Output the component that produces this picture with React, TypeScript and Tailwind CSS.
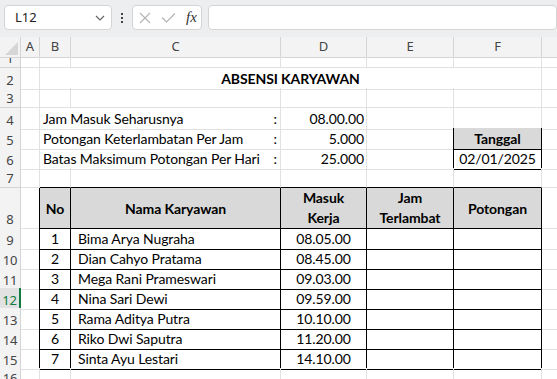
import type { ReactNode } from 'react';

const COLS = 'grid grid-cols-[21px_19px_31px_210px_86px_87px_88px_1fr]';
const GRID = 'border-r border-b border-[#e1e1e1]';
const BOX = 'border-r border-b border-black';
const HEAD_FILL = 'bg-[#d9d9d9] font-bold';

const employees = [
  { no: 1, name: 'Bima Arya Nugraha', masuk: '08.05.00' },
  { no: 2, name: 'Dian Cahyo Pratama', masuk: '08.45.00' },
  { no: 3, name: 'Mega Rani Prameswari', masuk: '09.03.00' },
  { no: 4, name: 'Nina Sari Dewi', masuk: '09.59.00' },
  { no: 5, name: 'Rama Aditya Putra', masuk: '10.10.00' },
  { no: 6, name: 'Riko Dwi Saputra', masuk: '11.20.00' },
  { no: 7, name: 'Sinta Ayu Lestari', masuk: '14.10.00' },
];

const RowHead = ({ n, active = false }: { n: number; active?: boolean }) => (
  <div
    className={
      active
        ? "flex items-end justify-center border-b border-[#d4d4d4] border-r-2 border-r-[#107c41] bg-[#e2e2e2] text-[13px] leading-[18px] text-[#107c41] font-['Noto_Sans',sans-serif]"
        : "flex items-end justify-center border-r border-b border-[#d4d4d4] bg-[#f3f3f3] text-[13px] leading-[18px] text-[#444] font-['Noto_Sans',sans-serif]"
    }
  >
    {n}
  </div>
);

const Row = ({ n, tall = false, active = false, children }: { n: number; tall?: boolean; active?: boolean; children: ReactNode }) => (
  <div className={`${COLS} ${tall ? 'h-[40px]' : 'h-[20px]'}`}>
    <RowHead n={n} active={active} />
    {children}
  </div>
);

const EmptyRow = ({ n }: { n: number }) => (
  <Row n={n}>
    <div className={GRID} />
    <div className={GRID} />
    <div className={GRID} />
    <div className={GRID} />
    <div className={GRID} />
    <div className={GRID} />
    <div className="border-b border-[#e1e1e1]" />
  </Row>
);

const InfoRow = ({ n, label, value, right }: { n: number; label: string; value: string; right: ReactNode }) => (
  <Row n={n}>
    <div className={GRID} />
    <div className={`col-span-2 flex items-center justify-between pl-[3px] pr-[3px] ${GRID}`}>
      <span>{label}</span>
      <span>:</span>
    </div>
    <div className={`flex items-center justify-end pr-[2px] ${GRID}`}>{value}</div>
    {right}
    <div className="border-b border-[#e1e1e1]" />
  </Row>
);

export default function App() {
  return (
    <div className="w-[557px] h-[379px] overflow-hidden bg-white">
      {/* toolbar */}
      <div className="h-[37px] bg-[#eceef0] flex items-start pt-[5px]">
        <div className="ml-[4px] w-[111px] h-[25px] rounded-[4px] border border-[#d4d4d4] bg-white flex items-center justify-between pl-[10px] pr-[6px] text-[13px] text-[#222] font-['Noto_Sans',sans-serif]">
          <span>L12</span>
          <svg width="10" height="6" viewBox="0 0 10 6" fill="none" stroke="#666" strokeWidth="1.2">
            <path d="M1 1l4 4 4-4" />
          </svg>
        </div>
        <div className="ml-[9px] h-[25px] flex flex-col items-center justify-center gap-[2px]">
          <span className="w-[2px] h-[2px] bg-[#444]" />
          <span className="w-[2px] h-[2px] bg-[#444]" />
          <span className="w-[2px] h-[2px] bg-[#444]" />
        </div>
        <div className="ml-[9px] w-[72px] h-[25px] rounded-[4px] border border-[#d4d4d4] bg-white flex items-center pl-[6px]">
          <svg width="12" height="12" viewBox="0 0 12 12" fill="none" stroke="#b3b3b3" strokeWidth="1.1">
            <path d="M1 1l10 10M11 1L1 11" />
          </svg>
          <svg className="ml-[10px]" width="15" height="10" viewBox="0 0 15 10" fill="none" stroke="#b3b3b3" strokeWidth="1.1">
            <path d="M1 4.5l4.5 4.5L14 0.5" />
          </svg>
          <span className="ml-[10px] text-[15px] italic text-[#333] font-['Liberation_Serif',serif]">fx</span>
        </div>
        <div className="ml-[6px] w-[360px] h-[25px] rounded-[4px] border border-[#d4d4d4] bg-white" />
      </div>

      {/* column headers */}
      <div className={`${COLS} h-[20px] bg-[#f3f3f3] text-[13px] text-[#444] font-['Noto_Sans',sans-serif]`}>
        <div className="relative border-r border-b border-[#d4d4d4]">
          <svg className="absolute right-[2px] bottom-[2px]" width="13" height="13" viewBox="0 0 13 13">
            <path d="M13 0V13H0Z" fill="#d6d6d6" />
          </svg>
        </div>
        {['A', 'B', 'C', 'D', 'E', 'F'].map((c) => (
          <div key={c} className="flex items-center justify-center border-r border-b border-[#d4d4d4]">
            {c}
          </div>
        ))}
        <div className="border-b border-[#d4d4d4]" />
      </div>

      {/* sheet body */}
      <div className="h-[322px] overflow-hidden text-[14px] tracking-[-0.1px] text-black font-['Lato',sans-serif]">
        <div className="mt-[-9px]">
          <EmptyRow n={1} />
          <Row n={2}>
            <div className={GRID} />
            <div className={`col-span-5 flex items-center justify-center font-bold ${GRID}`}>ABSENSI KARYAWAN</div>
            <div className="border-b border-[#e1e1e1]" />
          </Row>
          <EmptyRow n={3} />
          <InfoRow
            n={4}
            label="Jam Masuk Seharusnya"
            value="08.00.00"
            right={
              <>
                <div className={GRID} />
                <div className="border-r border-r-[#e1e1e1] border-b border-b-black" />
              </>
            }
          />
          <InfoRow
            n={5}
            label="Potongan Keterlambatan Per Jam"
            value="5.000"
            right={
              <>
                <div className="border-r border-r-black border-b border-b-[#e1e1e1]" />
                <div className={`flex items-center justify-center ${HEAD_FILL} ${BOX}`}>Tanggal</div>
              </>
            }
          />
          <InfoRow
            n={6}
            label="Batas Maksimum Potongan Per Hari"
            value="25.000"
            right={
              <>
                <div className="border-r border-r-black border-b border-b-[#e1e1e1]" />
                <div className={`flex items-center justify-center ${BOX}`}>02/01/2025</div>
              </>
            }
          />
          <Row n={7}>
            <div className={GRID} />
            <div className="border-r border-r-[#e1e1e1] border-b border-b-black" />
            <div className="border-r border-r-[#e1e1e1] border-b border-b-black" />
            <div className="border-r border-r-[#e1e1e1] border-b border-b-black" />
            <div className="border-r border-r-[#e1e1e1] border-b border-b-black" />
            <div className="border-r border-r-[#e1e1e1] border-b border-b-black" />
            <div className="border-b border-[#e1e1e1]" />
          </Row>
          <Row n={8} tall>
            <div className="border-r border-r-black border-b border-b-[#e1e1e1]" />
            <div className={`flex items-center justify-center ${HEAD_FILL} ${BOX}`}>No</div>
            <div className={`flex items-center justify-center ${HEAD_FILL} ${BOX}`}>Nama Karyawan</div>
            <div className={`flex flex-col items-center justify-center leading-[20px] ${HEAD_FILL} ${BOX}`}>
              <span>Masuk</span>
              <span>Kerja</span>
            </div>
            <div className={`flex flex-col items-center justify-center leading-[20px] ${HEAD_FILL} ${BOX}`}>
              <span>Jam</span>
              <span>Terlambat</span>
            </div>
            <div className={`flex items-center justify-center ${HEAD_FILL} ${BOX}`}>Potongan</div>
            <div className="border-b border-[#e1e1e1]" />
          </Row>
          {employees.map((e) => (
            <Row key={e.no} n={e.no + 8} active={e.no === 4}>
              <div className="border-r border-r-black border-b border-b-[#e1e1e1]" />
              <div className={`flex items-center justify-center ${BOX}`}>{e.no}</div>
              <div className={`flex items-center pl-[7px] ${BOX}`}>{e.name}</div>
              <div className={`flex items-center justify-center ${BOX}`}>{e.masuk}</div>
              <div className={BOX} />
              <div className={BOX} />
              <div className="border-b border-[#e1e1e1]" />
            </Row>
          ))}
          <EmptyRow n={16} />
        </div>
      </div>
    </div>
  );
}
